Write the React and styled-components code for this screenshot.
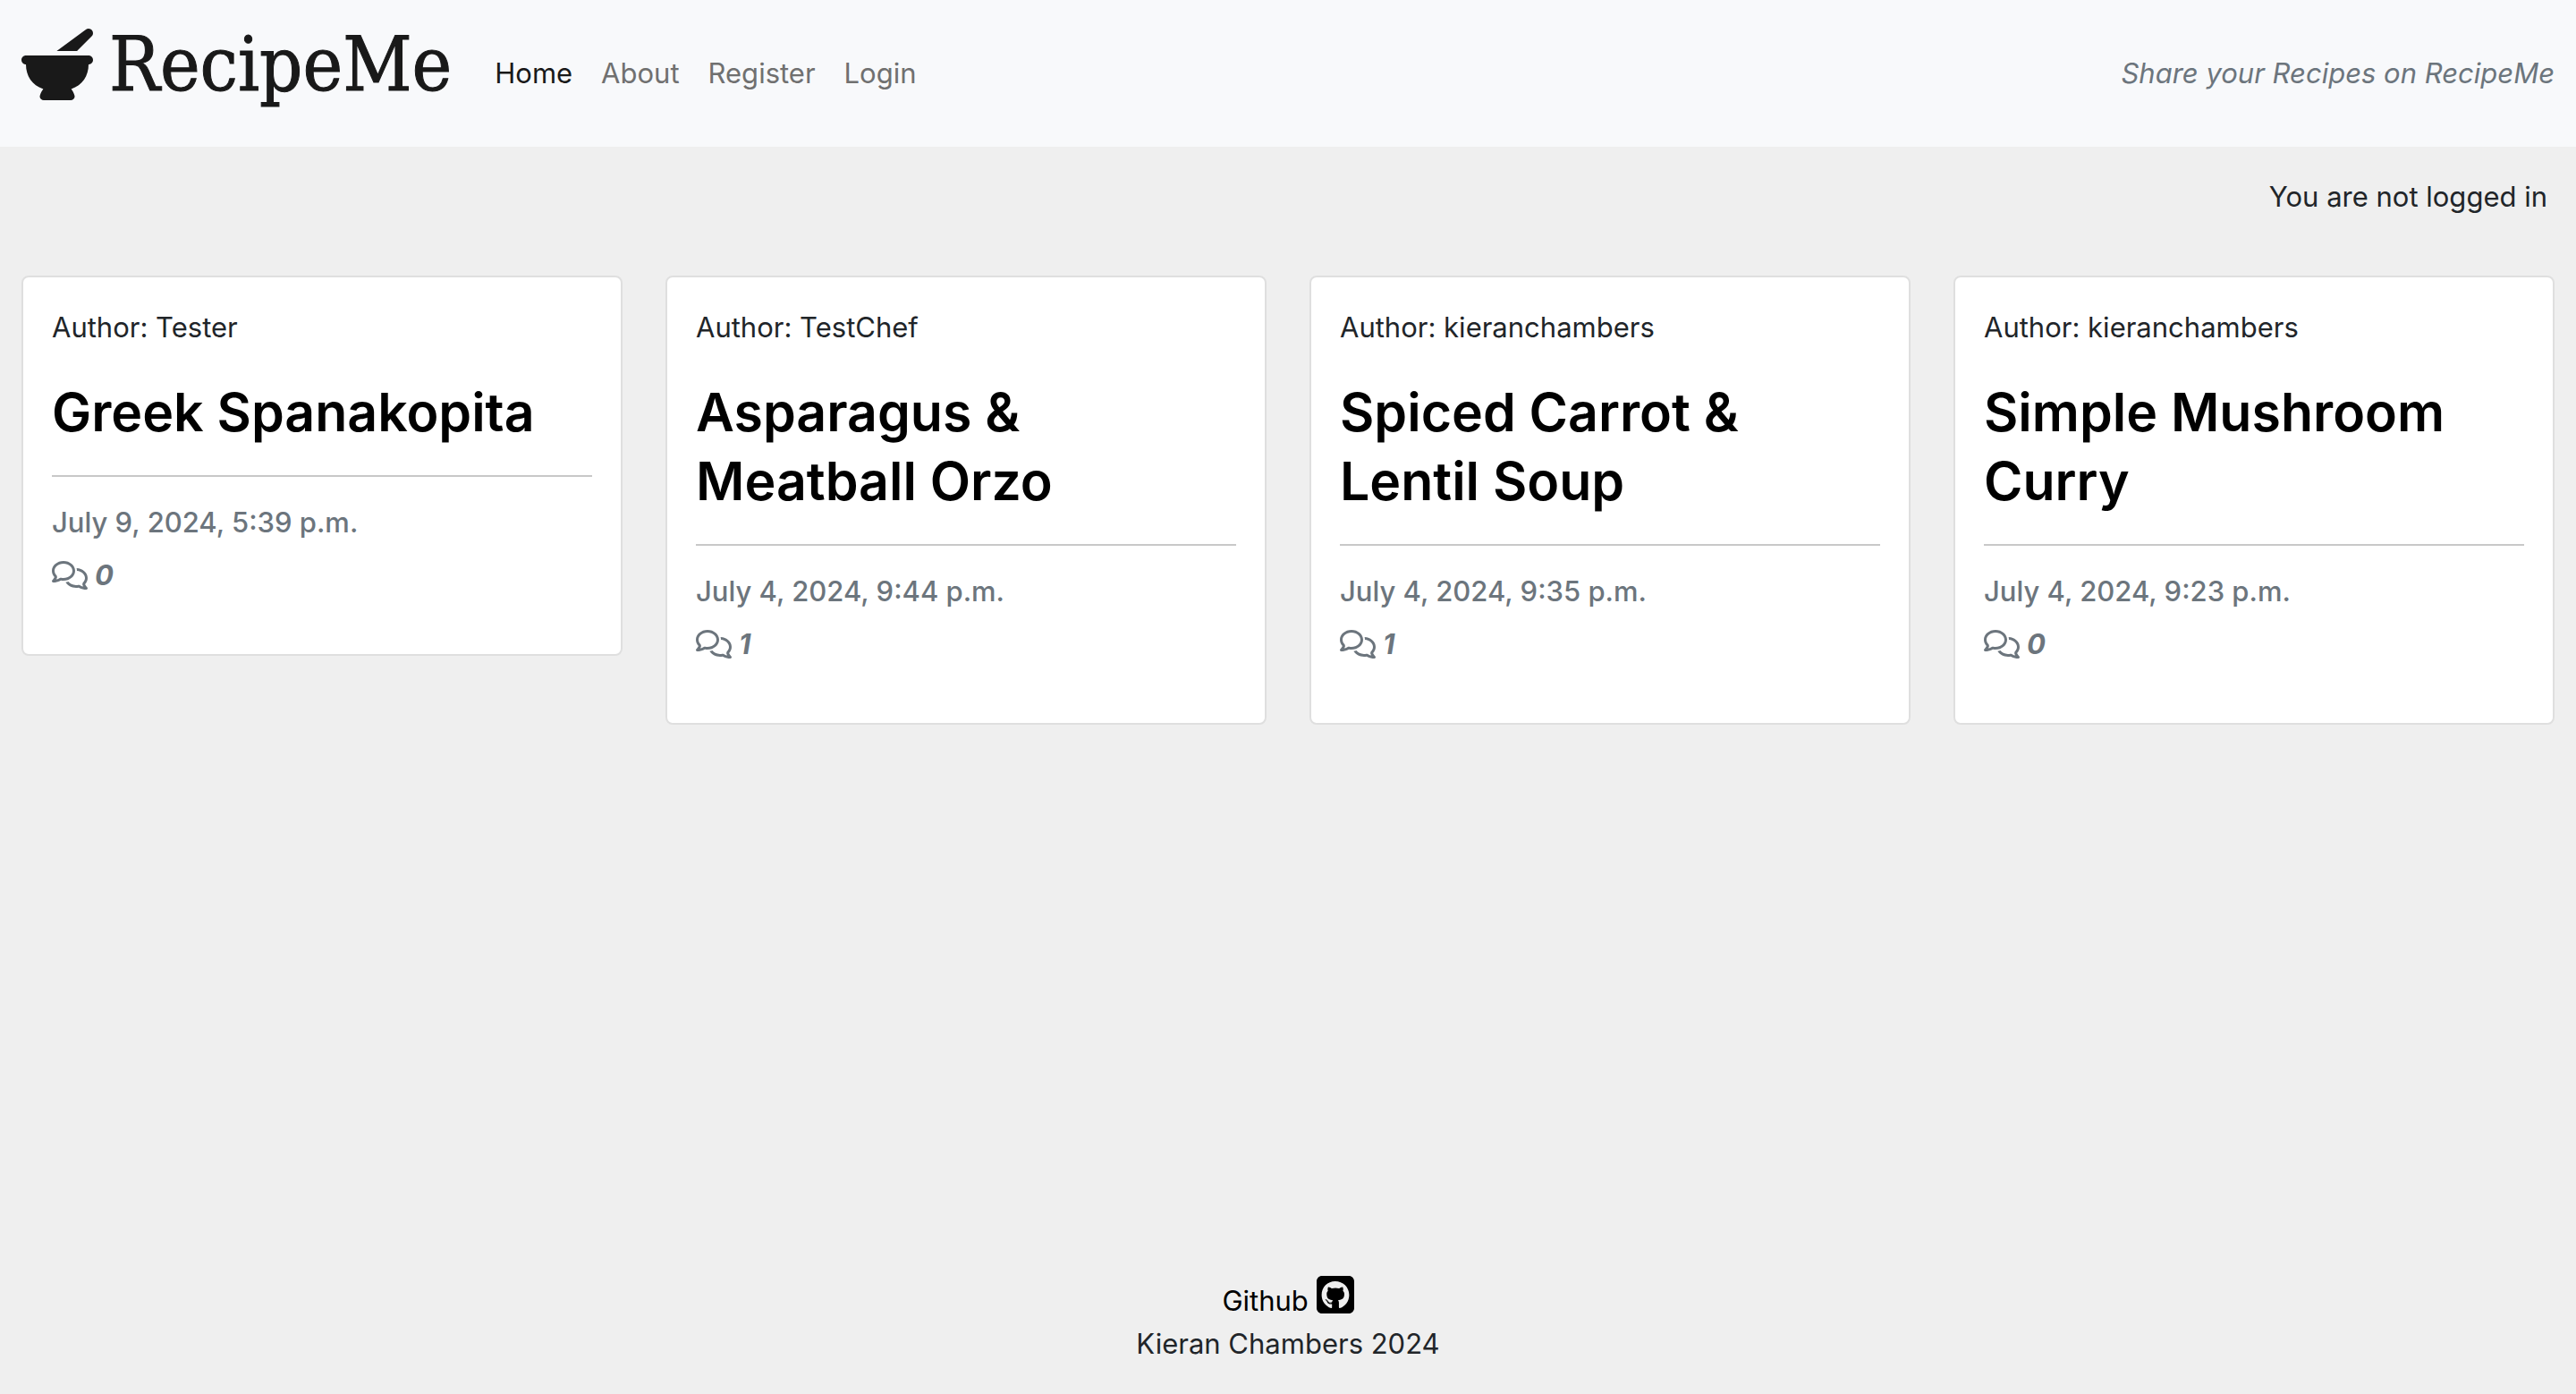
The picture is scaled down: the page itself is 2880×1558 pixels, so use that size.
import React from "react";
import styled, { createGlobalStyle } from "styled-components";
import { FaMortarPestle, FaRegComments, FaSquareGithub } from "react-icons/fa6";

const GlobalStyle = createGlobalStyle`
  *, *::before, *::after {
    box-sizing: border-box;
  }

  body {
    margin: 0;
    background: #efefef;
    color: #212529;
    font-family: Inter, "Liberation Sans", sans-serif;
    font-size: 31px;
    line-height: 48px;
  }

  a {
    text-decoration: none;
  }
`;

const Page = styled.div`
  display: flex;
  flex-direction: column;
  min-height: 100vh;
`;

const Navbar = styled.header`
  display: flex;
  align-items: center;
  min-height: 164px;
  padding: 16px 24px;
  background: #f8f9fb;
`;

const Brand = styled.a`
  display: flex;
  align-items: center;
  gap: 18px;
  margin-right: 48px;
  padding-bottom: 20px;
  color: #191919;
  font-family: "DejaVu Serif Condensed", "DejaVu Serif", serif;
  font-size: 84px;
  line-height: 112px;
  -webkit-text-stroke: 1px #191919;

  svg {
    width: 80px;
    height: 80px;
    stroke: none;
  }
`;

const NavLinks = styled.nav`
  display: flex;
  gap: 32px;
`;

const NavLink = styled.a`
  color: ${({ $active }) => ($active ? "#191919" : "#707070")};
`;

const Tagline = styled.em`
  margin-left: auto;
  color: #6c757d;
`;

const LoginStatus = styled.p`
  margin: 0;
  padding: 32px 32px 0;
  text-align: right;
`;

const RecipeGrid = styled.main`
  display: grid;
  grid-template-columns: repeat(4, minmax(0, 1fr));
  align-items: start;
  gap: 48px;
  padding: 64px 24px 48px;
`;

const Card = styled.article`
  padding: 32px;
  border: 2px solid #dfdfdf;
  border-radius: 8px;
  background: #fff;
`;

const Author = styled.p`
  margin: 0 0 32px;
`;

const Title = styled.h2`
  margin: 0;
  font-size: 59px;
  font-weight: 600;
  line-height: 77px;

  a {
    color: #000;
  }
`;

const Divider = styled.hr`
  height: 2px;
  margin: 32px 0;
  border: 0;
  background: #c8c8c8;
`;

const Posted = styled.p`
  margin: 0 0 16px;
  color: #6c757d;
  font-weight: 500;
  line-height: 38px;
`;

const Comments = styled.p`
  display: flex;
  align-items: center;
  gap: 8px;
  margin: 0 0 32px;
  color: #6c757d;
  font-style: italic;
  font-weight: 700;

  svg {
    width: 40px;
    height: 32px;
  }
`;

const Footer = styled.footer`
  margin-top: auto;
  padding-bottom: 32px;
  text-align: center;
`;

const FooterLine = styled.p`
  margin: 0;
`;

const GithubLink = styled.a`
  color: #000;

  svg {
    width: 42px;
    height: 48px;
    vertical-align: -6px;
  }
`;

const links = ["Home", "About", "Register", "Login"];

const recipes = [
  { author: "Tester", title: "Greek Spanakopita", posted: "July 9, 2024, 5:39 p.m.", comments: 0 },
  { author: "TestChef", title: "Asparagus & Meatball Orzo", posted: "July 4, 2024, 9:44 p.m.", comments: 1 },
  { author: "kieranchambers", title: "Spiced Carrot & Lentil Soup", posted: "July 4, 2024, 9:35 p.m.", comments: 1 },
  { author: "kieranchambers", title: "Simple Mushroom Curry", posted: "July 4, 2024, 9:23 p.m.", comments: 0 },
];

function RecipeCard({ recipe }) {
  return (
    <Card>
      <Author>Author: {recipe.author}</Author>
      <Title>
        <a href="#recipe">{recipe.title}</a>
      </Title>
      <Divider />
      <Posted>{recipe.posted}</Posted>
      <Comments>
        <FaRegComments aria-hidden="true" />
        {recipe.comments}
      </Comments>
    </Card>
  );
}

export default function App() {
  return (
    <Page>
      <GlobalStyle />
      <Navbar>
        <Brand href="#home">
          <FaMortarPestle aria-hidden="true" />
          RecipeMe
        </Brand>
        <NavLinks>
          {links.map((label, index) => (
            <NavLink key={label} href={`#${label.toLowerCase()}`} $active={index === 0}>
              {label}
            </NavLink>
          ))}
        </NavLinks>
        <Tagline>Share your Recipes on RecipeMe</Tagline>
      </Navbar>
      <LoginStatus>You are not logged in</LoginStatus>
      <RecipeGrid>
        {recipes.map((recipe) => (
          <RecipeCard key={recipe.title} recipe={recipe} />
        ))}
      </RecipeGrid>
      <Footer>
        <FooterLine>
          <GithubLink href="#github">
            Github <FaSquareGithub aria-hidden="true" />
          </GithubLink>
        </FooterLine>
        <FooterLine>Kieran Chambers 2024</FooterLine>
      </Footer>
    </Page>
  );
}
